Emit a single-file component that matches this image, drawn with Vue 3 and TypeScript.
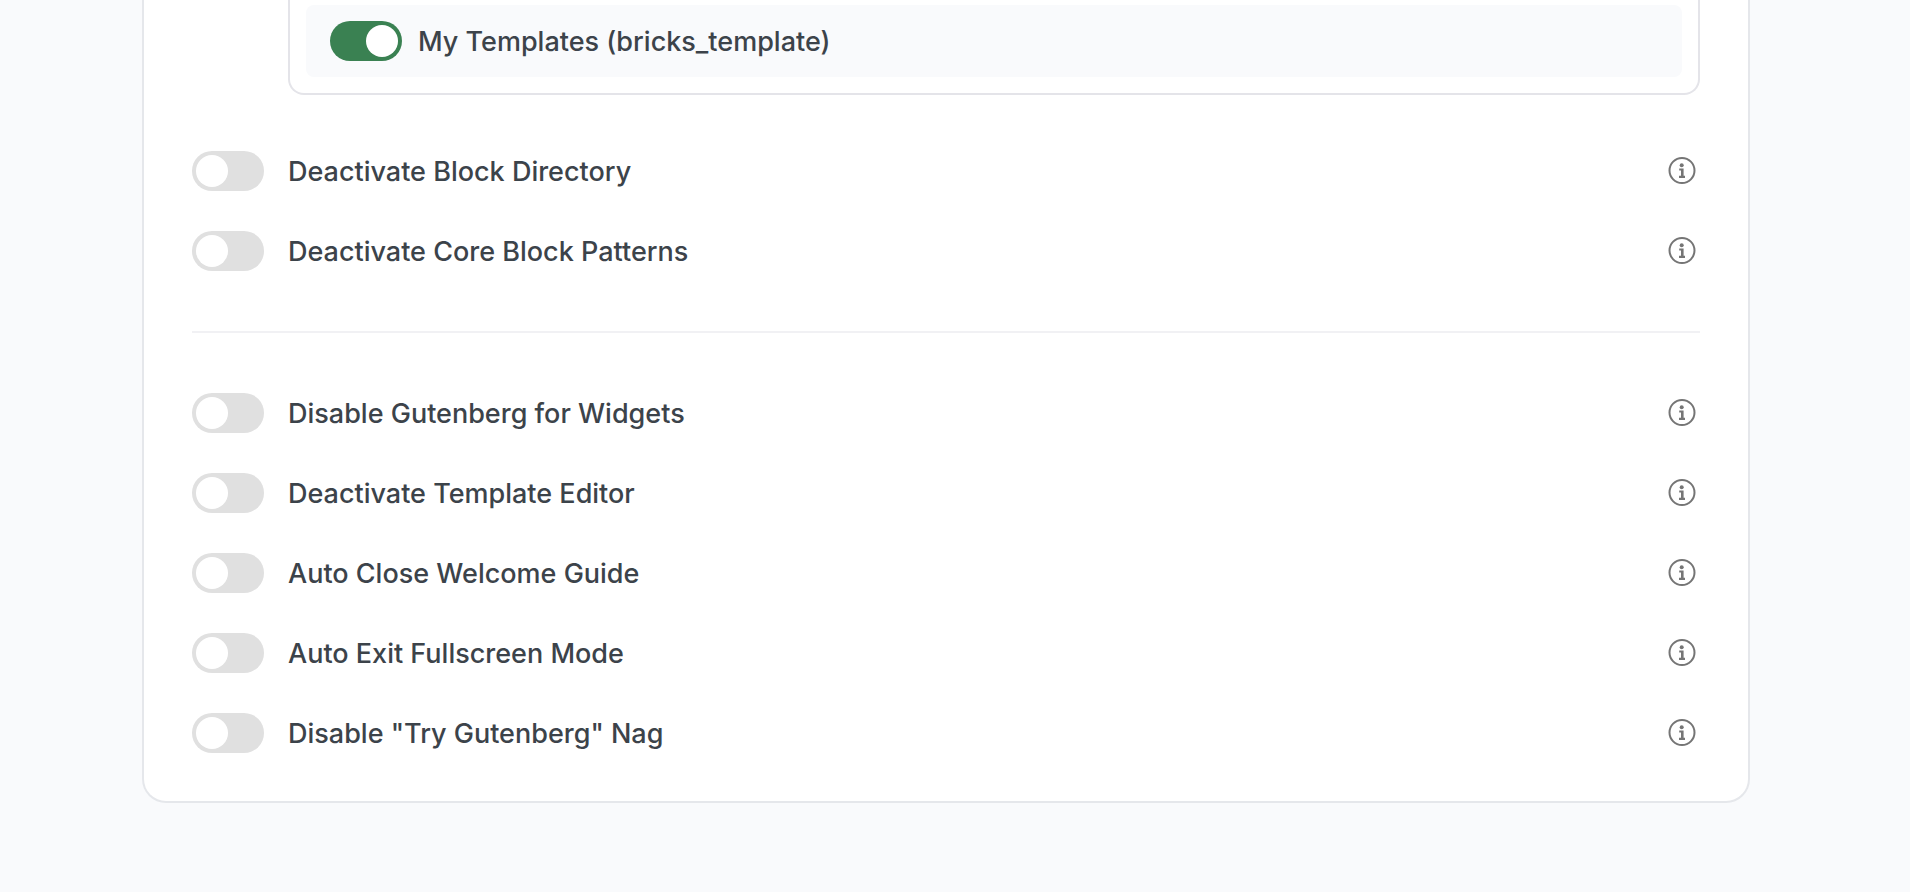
<script setup lang="ts">
import { reactive } from 'vue'

interface Setting {
  id: string
  label: string
  enabled: boolean
}

const postType = reactive<Setting>({
  id: 'bricks-template',
  label: 'My Templates (bricks_template)',
  enabled: true,
})

const groups = reactive<Setting[][]>([
  [
    { id: 'block-directory', label: 'Deactivate Block Directory', enabled: false },
    { id: 'core-patterns', label: 'Deactivate Core Block Patterns', enabled: false },
  ],
  [
    { id: 'widgets', label: 'Disable Gutenberg for Widgets', enabled: false },
    { id: 'template-editor', label: 'Deactivate Template Editor', enabled: false },
    { id: 'welcome-guide', label: 'Auto Close Welcome Guide', enabled: false },
    { id: 'fullscreen', label: 'Auto Exit Fullscreen Mode', enabled: false },
    { id: 'try-gutenberg', label: 'Disable "Try Gutenberg" Nag', enabled: false },
  ],
])
</script>

<template>
  <main class="page">
    <section class="card">
      <div class="post-types">
        <div class="post-type">
          <input :id="postType.id" v-model="postType.enabled" class="toggle" type="checkbox" />
          <label class="label" :for="postType.id">{{ postType.label }}</label>
        </div>
      </div>
      <div v-for="(group, index) in groups" :key="index" class="group">
        <div v-for="item in group" :key="item.id" class="row">
          <input :id="item.id" v-model="item.enabled" class="toggle" type="checkbox" />
          <label class="label" :for="item.id">{{ item.label }}</label>
          <button class="info" type="button" :aria-label="'About: ' + item.label">
            <svg viewBox="0 0 28 28" width="28" height="28" aria-hidden="true">
              <circle cx="14" cy="13.5" r="12.5" fill="none" stroke="currentColor" stroke-width="2" />
              <circle cx="13.7" cy="8.3" r="2" fill="currentColor" />
              <path d="M11.2 11.4h4.4v7.4h1.4v2.2h-6v-2.2h2v-5.2h-1.8z" fill="currentColor" />
            </svg>
          </button>
        </div>
      </div>
    </section>
  </main>
</template>

<style>
body {
  margin: 0;
  background: #f9fafc;
}
</style>

<style scoped>
.page {
  box-sizing: border-box;
  min-height: 100vh;
  padding: 0 160px 88px 142px;
  background: #f9fafc;
  color: #3c434a;
  font-family: Inter, "Liberation Sans", sans-serif;
  font-size: 27px;
  font-weight: 450;
  line-height: 38px;
}

.card {
  padding: 0 48px 48px;
  border: 2px solid #e5e7eb;
  border-top: 0;
  border-radius: 0 0 24px 24px;
  background: #fff;
}

.post-types {
  margin: 0 0 56px 96px;
  padding: 5px 16px 16px;
  border: 2px solid #e4e4e9;
  border-top: 0;
  border-radius: 0 0 16px 16px;
}

.post-type {
  display: flex;
  align-items: center;
  gap: 16px;
  padding: 16px 24px;
  border-radius: 8px;
  background: #f9fafc;
}

.group {
  display: flex;
  flex-direction: column;
  gap: 40px;
}

.group + .group {
  margin-top: 60px;
  padding-top: 60px;
  border-top: 2px solid #f1f1f4;
}

.row {
  display: flex;
  align-items: center;
  gap: 24px;
}

.toggle {
  display: flex;
  flex: none;
  box-sizing: border-box;
  width: 72px;
  height: 40px;
  margin: 0;
  padding: 4px;
  border-radius: 20px;
  appearance: none;
  background: #e0e0e0;
  cursor: pointer;
}

.toggle::before {
  width: 32px;
  height: 32px;
  border-radius: 50%;
  background: #fff;
  content: "";
}

.toggle:checked {
  justify-content: flex-end;
  background: #3a8152;
}

.label {
  padding-top: 2px;
  cursor: pointer;
}

.info {
  display: flex;
  align-items: center;
  justify-content: center;
  width: 36px;
  height: 36px;
  margin-left: auto;
  padding: 0;
  border: 0;
  background: none;
  color: #757575;
  cursor: pointer;
}
</style>
